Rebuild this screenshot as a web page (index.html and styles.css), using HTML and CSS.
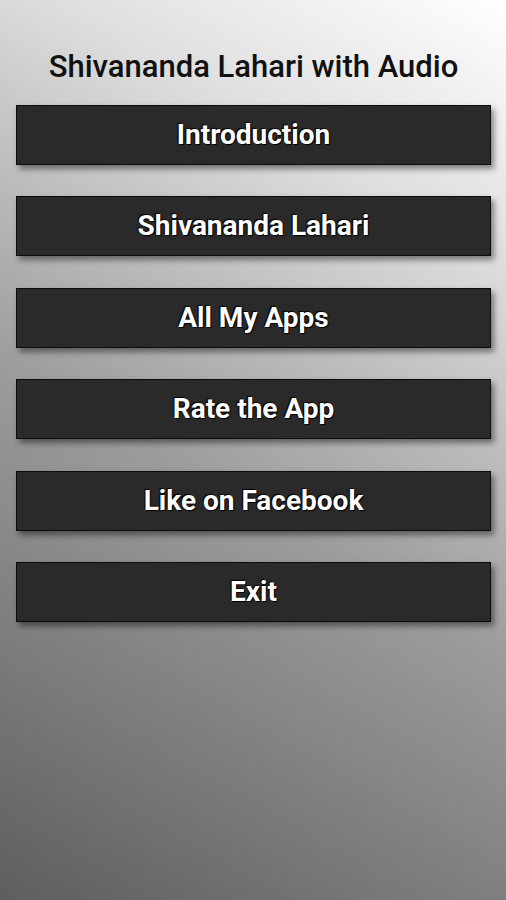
FILE: index.html
```html
<!DOCTYPE html>
<html>
	<head>
		<meta charset="utf-8">
		<title>Shivananda Lahari with Audio</title>
		<link rel="stylesheet" href="styles.css">
	</head>
	<body>
		<div class="screen">
			<h1 class="title">Shivananda Lahari with Audio</h1>
			<ul class="menu">
				<li><a href="javascript:;">Introduction</a></li>
				<li><a href="javascript:;">Shivananda Lahari</a></li>
				<li><a href="javascript:;">All My Apps</a></li>
				<li><a href="javascript:;">Rate the App</a></li>
				<li><a href="javascript:;">Like on Facebook</a></li>
				<li><a href="javascript:;">Exit</a></li>
			</ul>
		</div>
	</body>
</html>
```
FILE: styles.css
```css
*{
	margin: 0;
	padding: 0;
}
html,body{
	height: 100%;
}
body{
	font-family: Roboto, "Liberation Sans", sans-serif;
}
li{
	list-style: none;
}
.screen{
	height: 900px;
	box-sizing: border-box;
	padding: 48px 15px 0 16px;
	background: linear-gradient(210deg, #ffffff 0%, #dedede 22%, #9c9c9c 55%, #5e5e5e 100%);
}
.title{
	font-size: 31px;
	font-weight: 500;
	color: #111;
	text-align: center;
	line-height: 38px;
	margin-bottom: 19px;
}
.menu{
	display: flex;
	flex-direction: column;
	gap: 31.4px;
}
.menu li a{
	display: block;
	height: 58px;
	line-height: 58px;
	background: #2a2a2a;
	border: 1px solid #0c0c0c;
	box-shadow: 3px 4px 6px rgba(0,0,0,.45);
	color: #fff;
	font-size: 28px;
	font-weight: 700;
	text-align: center;
	text-decoration: none;
	text-shadow: 1px 1px 1px #000, -1px -1px 1px #000;
}
```
